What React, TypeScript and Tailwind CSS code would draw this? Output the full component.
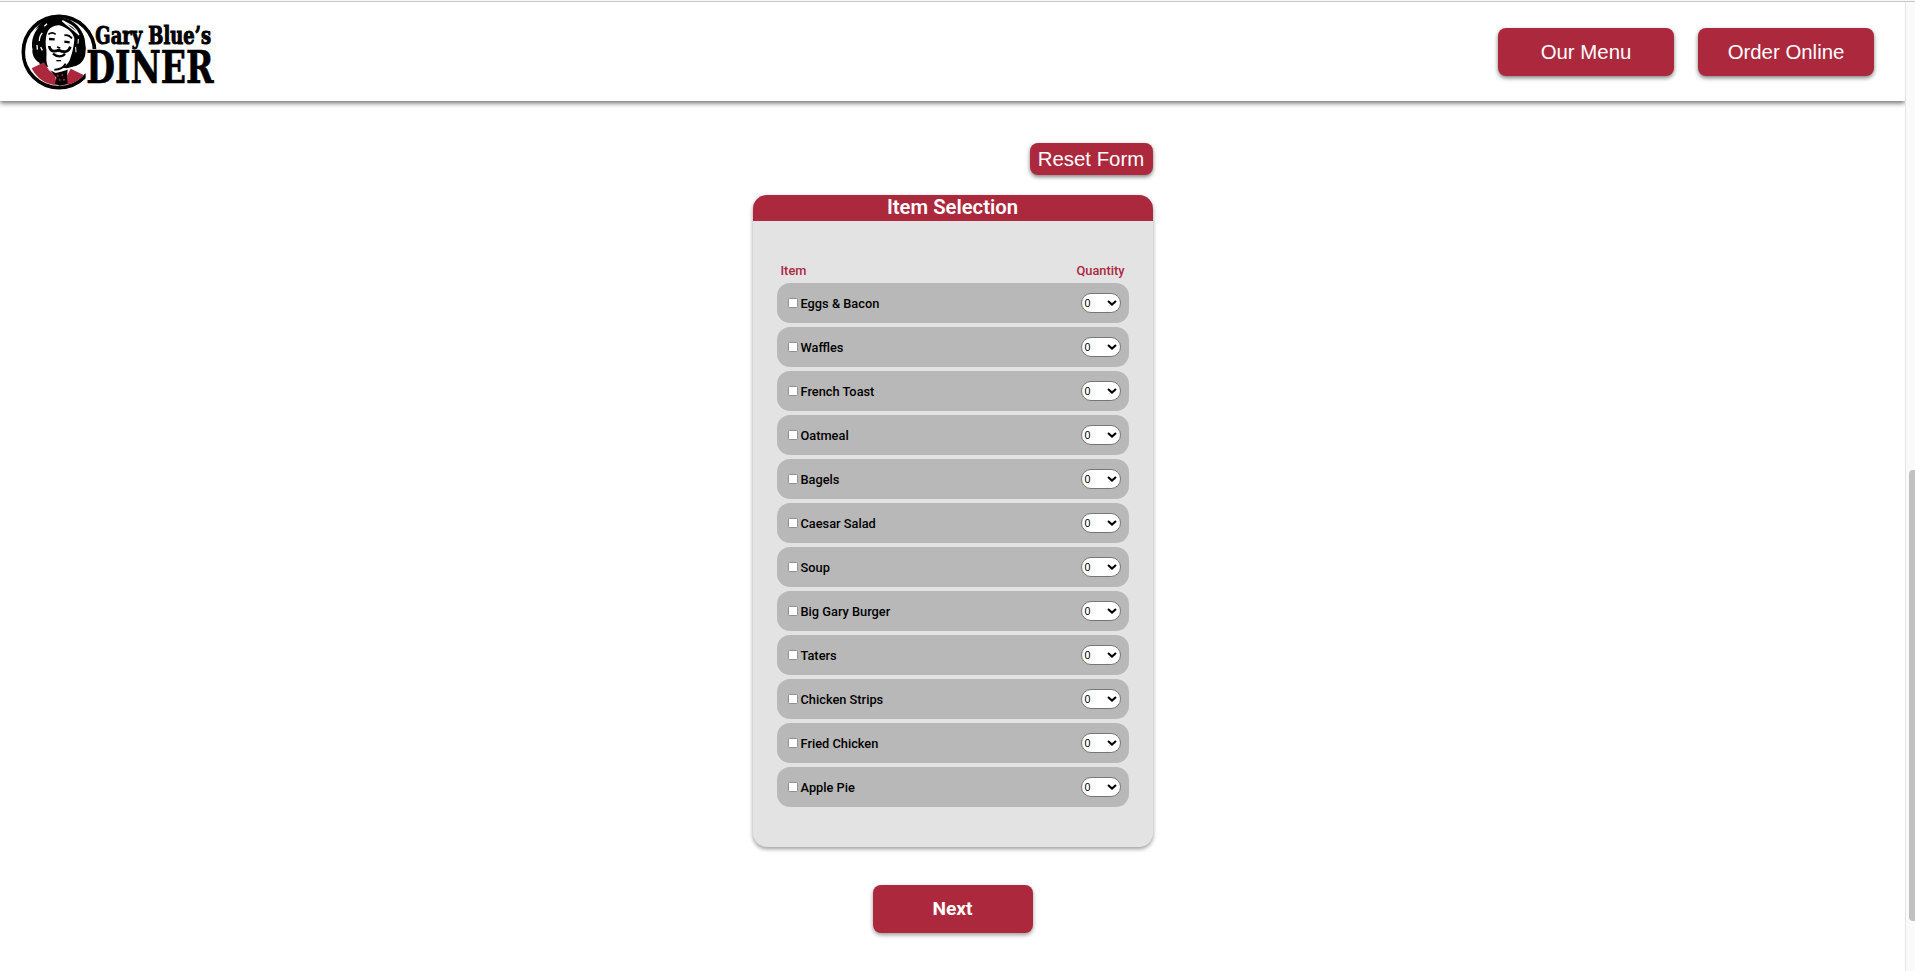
const items = [
  "Eggs & Bacon",
  "Waffles",
  "French Toast",
  "Oatmeal",
  "Bagels",
  "Caesar Salad",
  "Soup",
  "Big Gary Burger",
  "Taters",
  "Chicken Strips",
  "Fried Chicken",
  "Apple Pie",
];

function Logo() {
  return (
    <svg className="block h-[78px] w-[196px] overflow-visible" viewBox="61 40 588 234" role="img" aria-label="Gary Blue's Diner">
      <circle cx="178" cy="157" r="107" fill="#fff" stroke="#000" strokeWidth="11" />
      <path
        d="M106 93 C120 64 150 50 185 54 C225 58 250 90 255 118 L259 150 C258 176 246 192 230 198 L202 206 L150 200 C138 205 128 196 116 189 C100 180 94 162 98 148 C92 132 96 106 106 93Z"
        fill="#000"
      />
      <path d="M118 82 C96 96 76 134 78 174 C82 194 88 200 92 204 L120 190 C104 180 97 166 98 148 C95 128 98 104 118 82Z" fill="#fff" />
      <path d="M236 80 C258 92 274 120 277 145 L266 146 C260 120 250 98 236 80Z" fill="#fff" />
      <path d="M216 208 C234 204 248 192 262 176 L266 222 C246 222 228 214 216 208Z" fill="#fff" />
      <path d="M96 206 L133 188 L148 212 L166 226 L172 256 C140 256 112 238 96 206Z" fill="#ab283d" />
      <path d="M213 207 L252 226 C238 244 214 256 188 256 L200 232Z" fill="#ab283d" />
      <path
        d="M146 92 C154 82 168 74 184 78 C204 86 220 98 224 116 C224 134 218 160 212 176 C208 192 196 202 184 204 C166 212 152 208 142 194 C138 180 142 164 140 150 C136 130 138 106 146 92Z"
        fill="#fff"
      />
      <path d="M142 194 L150 210 L172 218 L188 206 L166 200Z" fill="#fff" />
      <path d="M188 63 C204 74 224 74 238 106 C226 92 208 82 188 63Z" fill="#000" stroke="#fff" strokeWidth="4" />
      <path d="M128 100 C120 108 119 116 119 124 M112 136 L113 150 M123 142 L128 152 M134 80 L142 72" fill="none" stroke="#fff" strokeWidth="4" />
      <path d="M236 118 L235 132 M228 142 L229 158" stroke="#fff" strokeWidth="3" />
      <g fill="none" stroke="#000">
        <path d="M146 104 C153 99 162 99 168 104 M194 107 C203 105 211 109 217 116" strokeWidth="5" />
        <path d="M148 118 L165 119 M194 126 L210 128" strokeWidth="7" />
        <path d="M172 142 L182 145" strokeWidth="4" />
        <path d="M149 139 C150 155 163 158 177 151 C193 160 208 157 212 141" strokeWidth="8" />
        <path d="M160 162 C172 173 188 173 196 162" strokeWidth="7" />
        <path d="M170 183 L184 183" strokeWidth="4" />
        <path d="M198 192 C192 204 180 210 164 210" strokeWidth="6" />
      </g>
      <path d="M152 212 L168 220 L184 216 L204 210 L202 232 L204 252 L180 258 L166 252 L170 234Z" fill="#000" />
      <g fill="#ab283d">
        <circle cx="174" cy="228" r="3" />
        <circle cx="188" cy="226" r="3" />
        <circle cx="180" cy="241" r="3" />
        <circle cx="193" cy="240" r="3" />
      </g>
      <path d="M258 148 H330 V256 H258Z M286 72 H330 V140 H290Z" fill="#fff" />
      <g fontFamily="'DejaVu Serif Condensed', 'DejaVu Serif', serif" fontWeight="700" fill="#000" stroke="#000">
        <text x="287" y="134" fontSize="75" textLength="347" lengthAdjust="spacingAndGlyphs" strokeWidth="3">
          Gary Blue’s
        </text>
        <text x="260" y="250" fontSize="135" textLength="382" lengthAdjust="spacingAndGlyphs" strokeWidth="2">
          DINER
        </text>
      </g>
    </svg>
  );
}

function ItemRow({ name }: { name: string }) {
  return (
    <li className="flex h-10 items-center justify-between rounded-[13px] bg-[#b8b8b8] pr-2 pl-[11px]">
      <label className="flex items-center gap-[3px] font-['Roboto'] text-[12.8px] leading-4 font-medium text-black">
        <span className="h-[10px] w-[10px] rounded-[1.5px] border border-[#8f8f8f] bg-white" />
        <span className="pt-px">{name}</span>
      </label>
      <button className="flex h-5 w-10 items-center justify-between rounded-[10px] border border-[#767676] bg-white pr-[3px] pl-[3px] font-['Liberation_Sans'] text-[10.7px] leading-none text-black">
        <span>0</span>
        <svg className="h-[6px] w-[10px]" viewBox="0 0 10 6" fill="none" stroke="#000" strokeWidth="2">
          <path d="M1 1 L5 4.6 L9 1" />
        </svg>
      </button>
    </li>
  );
}

export default function App() {
  return (
    <div className="flex h-[971px] w-full flex-col overflow-hidden bg-white">
      <div className="h-px shrink-0 bg-[#f8f8f8]" />
      <div className="h-px shrink-0 bg-[#c8c8c8]" />
      <div className="flex min-h-0 flex-1">
        <div className="flex min-w-0 flex-1 flex-col overflow-hidden">
          <header className="flex h-[99px] shrink-0 items-center justify-between bg-white pr-[31px] pl-5 shadow-[0_2px_5px_rgba(0,0,0,0.6)]">
            <Logo />
            <nav className="flex gap-6 font-['Liberation_Sans'] text-[20.4px] text-white">
              <button className="h-12 w-44 rounded-lg bg-[#ac283d] pt-0.5 shadow-[0_2px_4px_rgba(0,0,0,0.5)]">Our Menu</button>
              <button className="h-12 w-44 rounded-lg bg-[#ac283d] pt-0.5 shadow-[0_2px_4px_rgba(0,0,0,0.5)]">Order Online</button>
            </nav>
          </header>
          <main className="mx-auto flex w-[400px] flex-col items-center pt-[42px]">
            <button className="h-8 w-[123px] self-end rounded-lg bg-[#ac283d] font-['Liberation_Sans'] text-[20.4px] leading-8 whitespace-nowrap text-white shadow-[0_2px_4px_rgba(0,0,0,0.5)]">
              Reset Form
            </button>
            <section className="mt-5 h-[652px] w-full overflow-hidden rounded-[14px] bg-[#e3e3e3] shadow-[0_2px_4px_rgba(0,0,0,0.4)]">
              <h2 className="h-[26px] bg-[#ac283d] text-center font-['Roboto'] text-[20.3px] leading-6 font-semibold text-white">
                Item Selection
              </h2>
              <div className="px-6 pt-[42px]">
                <div className="flex h-5 justify-between pr-1 pl-1 font-['Roboto'] text-[12.8px] leading-4 font-medium text-[#ac283d]">
                  <span>Item</span>
                  <span>Quantity</span>
                </div>
                <ul className="flex flex-col gap-1">
                  {items.map((name) => (
                    <ItemRow key={name} name={name} />
                  ))}
                </ul>
              </div>
            </section>
            <button className="mt-[38px] h-12 w-40 rounded-lg bg-[#ac283d] font-['Roboto'] text-[19.2px] font-bold text-white shadow-[0_2px_4px_rgba(0,0,0,0.4)]">
              Next
            </button>
          </main>
        </div>
        <div className="flex w-[10px] flex-col items-end overflow-hidden border-l border-[#e5e5e5] bg-[#fafafa] pt-[468px]">
          <div className="h-[451px] w-[6px] rounded-l-[4px] bg-[#c1c1c1]" />
        </div>
      </div>
    </div>
  );
}
